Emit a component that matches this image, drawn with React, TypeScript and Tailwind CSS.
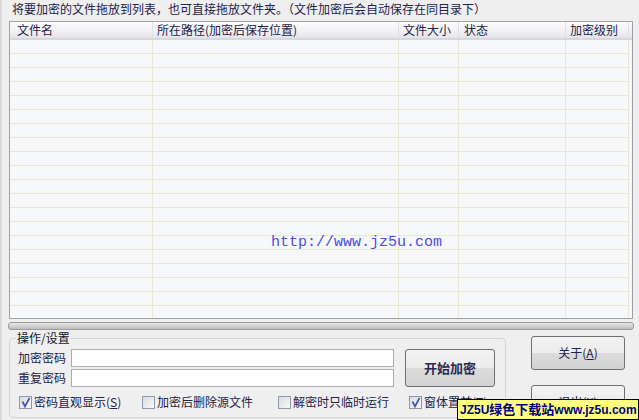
import React from "react";

const cols = [
  { w: "w-[143px]", pl: "pl-[7px]", label: "文件名" },
  { w: "w-[246px]", pl: "pl-[4px]", label: "所在路径(加密后保存位置)" },
  { w: "w-[60px]", pl: "pl-[4px]", label: "文件大小" },
  { w: "w-[107px]", pl: "pl-[5px]", label: "状态" },
  { w: "w-[63px]", pl: "pl-[4px]", label: "加密级别" },
];

function Check({ checked }: { checked?: boolean }) {
  return (
    <div className="w-[13px] h-[13px] border border-[#8e99aa] bg-[linear-gradient(135deg,#d8dbe2,#f8f8fa)] relative shrink-0">
      {checked && (
        <svg width="11" height="11" viewBox="0 0 11 11" className="absolute left-0 top-0">
          <path d="M2.5 4.5 L5 9.5 L9.5 0.8" fill="none" stroke="#4656a8" strokeWidth="1.7" />
        </svg>
      )}
    </div>
  );
}

function CheckItem({ checked, w, children }: { checked?: boolean; w: string; children: React.ReactNode }) {
  return (
    <div className={`flex items-center gap-[2px] ${w}`}>
      <Check checked={checked} />
      <span className="leading-[14px] whitespace-nowrap">{children}</span>
    </div>
  );
}

const btn =
  "border border-[#707070] rounded-[3px] bg-[linear-gradient(#f3f3f3_0%,#ececec_50%,#dcdcdc_50%,#d2d2d2_100%)] flex items-center justify-center";

export default function App() {
  return (
    <div className="w-[639px] h-[420px] bg-[#efefef] relative overflow-hidden border-l-2 border-[#d9d9d9] font-['Noto_Sans_CJK_SC',sans-serif] text-[12px] text-[#22224a] flex flex-col">
      <div className="h-[21px] pl-[10px] pt-[2px] leading-[14px]">
        将要加密的文件拖放到列表，也可直接拖放文件夹。（文件加密后会自动保存在同目录下）
      </div>

      <div className="ml-[7px] w-[624px] h-[298px] border border-[#9ea3ab] bg-[#f7f8fa] relative flex flex-col overflow-hidden">
        <div className="h-[18px] shrink-0 flex bg-[linear-gradient(#fbfbfc,#f1f1f4_60%,#e4e4e9)] border-b-2 border-[#d6d6dc]">
          {cols.map((c, i) => (
            <div key={i} className={`${c.w} ${c.pl} h-full border-r border-[#dfdfe4] leading-[16px] whitespace-nowrap`}>
              {c.label}
            </div>
          ))}
        </div>
        <div className="flex flex-col">
          {Array.from({ length: 20 }).map((_, r) => (
            <div key={r} className="flex h-[14px] shrink-0">
              {cols.map((c, i) => (
                <div key={i} className={`${c.w} h-full border-r border-b border-[#ebe7d5]`} />
              ))}
            </div>
          ))}
        </div>
        <div className="absolute left-[261px] top-[213px] font-['Liberation_Mono',monospace] text-[15px] leading-[15px] text-[#4b4be6]">
          http://www.jz5u.com
        </div>
      </div>

      <div className="mt-[3px] ml-[6px] w-[626px] h-[8px] rounded-[3px] border border-[#9c9c9c] bg-[linear-gradient(#e6e6e6,#d4d4d4_50%,#bcbcbc)]" />

      <div className="flex">
        <div className="ml-[7px] mt-[8px] w-[497px] h-[80px] border border-[#d0d4dc] rounded-[4px] relative pt-[10px] pl-[8px]">
          <div className="absolute left-[6px] top-[-8px] px-[1px] bg-[#efefef] leading-[14px] text-[#141428]">
            操作/设置
          </div>
          <div className="flex">
            <div className="flex flex-col gap-[2px]">
              <div className="flex items-center h-[18px]">
                <span className="w-[53px]">加密密码</span>
                <div className="w-[323px] h-[18px] border border-[#a7adb6] bg-white" />
              </div>
              <div className="flex items-center h-[18px]">
                <span className="w-[53px]">重复密码</span>
                <div className="w-[323px] h-[18px] border border-[#a7adb6] bg-white" />
              </div>
            </div>
            <div className={`${btn} ml-[11px] w-[90px] h-[38px] font-bold text-[13px] text-[#2a2a50]`}>开始加密</div>
          </div>
          <div className="flex mt-[8px] ml-[1px]">
            <CheckItem checked w="w-[123px]">
              密码直观显示(<span className="underline">S</span>)
            </CheckItem>
            <CheckItem w="w-[136px]">加密后删除源文件</CheckItem>
            <CheckItem w="w-[131px]">解密时只临时运行</CheckItem>
            <CheckItem checked w="w-[90px]">
              窗体置前(<span className="underline">T</span>)
            </CheckItem>
          </div>
        </div>

        <div className="ml-[25px] mt-[6px] flex flex-col">
          <div className={`${btn} w-[94px] h-[34px]`}>
            关于(<span className="underline">A</span>)
          </div>
          <div className={`${btn} w-[94px] h-[34px] mt-[15px]`}>
            退出(<span className="underline">X</span>)
          </div>
        </div>
      </div>

      <div className="absolute right-0 bottom-0 w-[182px] h-[21px] border border-black bg-[#ffff80] flex items-center pl-[2px] font-bold font-['Liberation_Sans','Noto_Sans_CJK_SC',sans-serif] text-[12px] text-[#000080] whitespace-nowrap leading-[14px]">
        JZ5U<span className="text-[13px]">绿色下载站</span>www.jz5u.com
      </div>
    </div>
  );
}
